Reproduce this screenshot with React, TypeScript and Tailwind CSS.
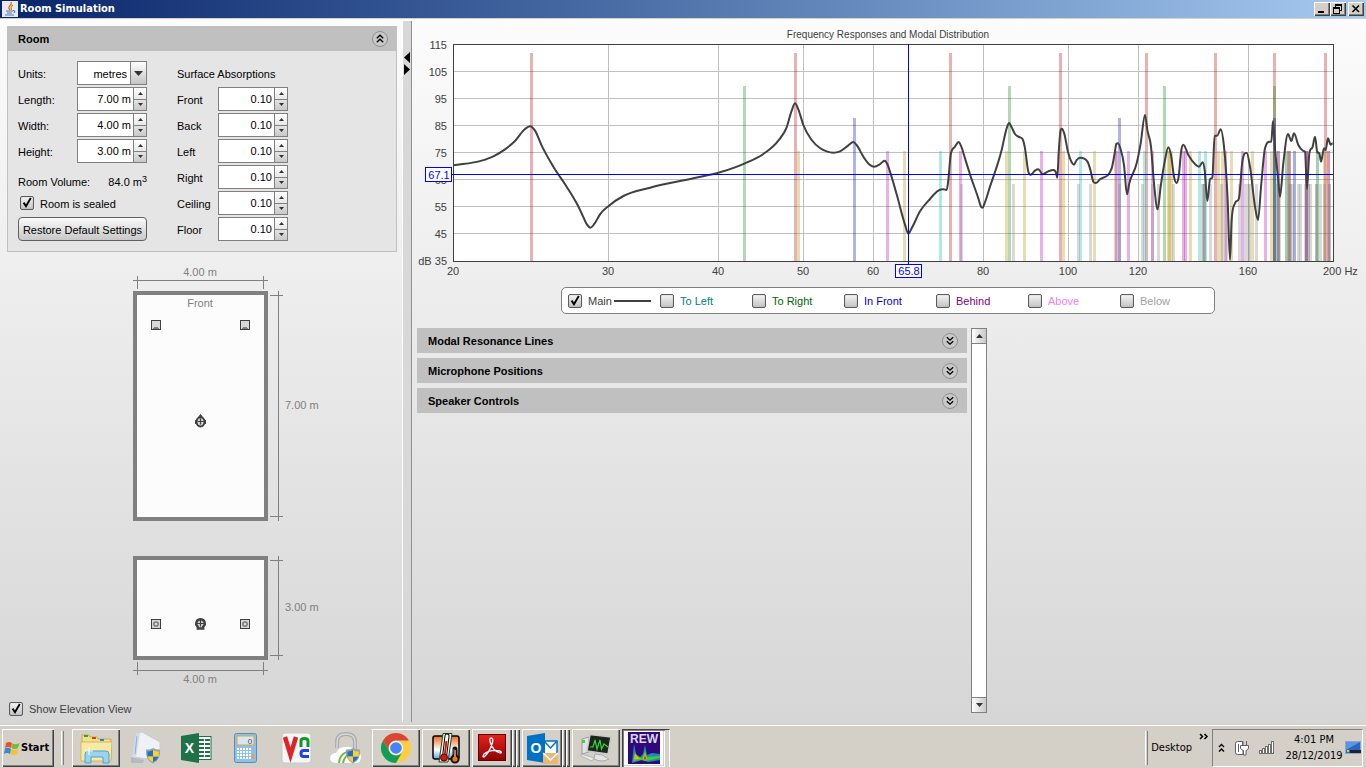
import { useState } from "react";
import type { ReactNode } from "react";

// ---- chart scale ----

const PLOT = { left: 41, top: 25, right: 921, bottom: 242 };
const levels = [115, 105, 95, 85, 75, 65, 55, 45];
const freqs = [20, 30, 40, 50, 60, 80, 100, 120, 160];

function freqToX(f: number) {
  return PLOT.left + 880 * Math.log10(f / 20);
}

function levelToY(db: number) {
  return PLOT.top + (115 - db) * 2.7;
}

// ---- room modes ----

type Mode = { x: number; kind: string };

// drawn in this order, so later kinds lie on top
const modeStyles: Record<string, { top: number; color: string }> = {
  L: { top: 34, color: "#b20000" },
  W: { top: 67, color: "#008000" },
  H: { top: 99, color: "#0000b2" },
  LW: { top: 132, color: "#b29000" },
  LH: { top: 132, color: "#b200b2" },
  WH: { top: 132, color: "#00b2b2" },
  LWH: { top: 165, color: "#808080" },
};

function roomModes(length: number, width: number, height: number) {
  const modes: Mode[] = [];
  for (let i = 0; i <= 9; i++) {
    for (let j = 0; j <= 6; j++) {
      for (let k = 0; k <= 4; k++) {
        const f = 171.5 * Math.hypot(i / length, j / width, k / height);
        if (f < 20 || f > 199) continue;
        const kind = (i ? "L" : "") + (j ? "W" : "") + (k ? "H" : "");
        modes.push({ x: Math.round(freqToX(f)) - 1, kind });
      }
    }
  }
  const order = Object.keys(modeStyles);
  return modes.sort((a, b) => order.indexOf(a.kind) - order.indexOf(b.kind));
}

const modes = roomModes(7, 4, 3);

// main response, three units to a pixel
const response: number[][] = [
  [130, 436], [215, 422], [250, 409], [285, 388], [315, 363], [345, 327],
  [360, 319], [375, 332], [395, 377], [430, 440], [470, 500], [500, 550],
  [515, 580], [530, 612], [541, 623], [553, 612], [570, 583], [597, 557],
  [640, 528], [720, 503], [850, 475], [930, 457], [1003, 431], [1060, 402],
  [1105, 362], [1130, 322], [1145, 272], [1155, 250], [1165, 268],
  [1180, 315], [1205, 360], [1230, 384], [1250, 394], [1270, 398],
  [1290, 394], [1315, 376], [1330, 366], [1340, 375], [1360, 410],
  [1380, 435], [1393, 440], [1408, 434], [1424, 422], [1432, 432],
  [1440, 455], [1460, 523], [1485, 614], [1495, 641], [1505, 625],
  [1530, 574], [1560, 537], [1585, 512], [1600, 508], [1610, 510],
  [1615, 480], [1622, 405], [1635, 380], [1646, 366], [1654, 380],
  [1665, 415], [1680, 463], [1705, 535], [1713, 560], [1718, 563],
  [1723, 552], [1740, 500], [1775, 390], [1790, 325], [1797, 309],
  [1805, 322], [1815, 342], [1825, 350], [1838, 358], [1845, 385],
  [1855, 455], [1862, 464], [1875, 452], [1885, 448], [1898, 462],
  [1915, 454], [1930, 450], [1938, 458], [1942, 473], [1946, 400],
  [1952, 330], [1956, 326], [1962, 338], [1975, 400], [1985, 427],
  [1992, 434], [2000, 420], [2010, 413], [2032, 424], [2040, 445],
  [2050, 485], [2057, 489], [2070, 478], [2105, 445], [2114, 400],
  [2119, 372], [2124, 370], [2132, 388], [2142, 435], [2151, 523],
  [2158, 490], [2180, 430], [2192, 370], [2205, 285], [2212, 330],
  [2223, 380], [2232, 490], [2243, 568], [2252, 500], [2265, 420],
  [2275, 382], [2283, 405], [2293, 475], [2300, 489], [2306, 470],
  [2314, 390], [2320, 374], [2335, 405], [2355, 432], [2367, 440],
  [2378, 427], [2384, 450], [2392, 543], [2400, 478], [2407, 473],
  [2414, 348], [2422, 347], [2432, 328], [2442, 380], [2448, 450],
  [2453, 540], [2460, 720], [2465, 600], [2475, 550], [2487, 535],
  [2497, 425], [2510, 398], [2520, 440], [2535, 560], [2544, 600],
  [2554, 490], [2565, 385], [2580, 365], [2584, 365], [2589, 303],
  [2596, 400], [2603, 460], [2610, 530], [2620, 430], [2634, 342],
  [2644, 363], [2652, 340], [2665, 375], [2680, 393], [2685, 395],
  [2691, 507], [2698, 400], [2708, 380], [2715, 350], [2722, 397],
  [2728, 400], [2733, 425], [2742, 385], [2747, 390], [2754, 355],
  [2762, 374], [2768, 370],
];

// smooth curve through the points, flat at every peak and dip
function smoothPath(pts: number[][]) {
  const slopes = pts.map((p, i) => {
    const a = pts[i - 1];
    const b = pts[i + 1];
    if (!a) return (b[1] - p[1]) / (b[0] - p[0]);
    if (!b) return 0;
    const h0 = p[0] - a[0];
    const h1 = b[0] - p[0];
    const s0 = (p[1] - a[1]) / h0;
    const s1 = (b[1] - p[1]) / h1;
    if (s0 * s1 <= 0) return 0;
    const mid = (s0 * h1 + s1 * h0) / (h0 + h1);
    const limit = 3 * Math.min(Math.abs(s0), Math.abs(s1));
    return Math.sign(mid) * Math.min(Math.abs(mid), limit);
  });
  let d = `M${pts[0][0]} ${pts[0][1]}`;
  for (let i = 1; i < pts.length; i++) {
    const [x0, y0] = pts[i - 1];
    const [x1, y1] = pts[i];
    const h = (x1 - x0) / 3;
    d += `C${x0 + h} ${y0 + h * slopes[i - 1]} ${x1 - h} ${y1 - h * slopes[i]} ${x1} ${y1}`;
  }
  return d;
}

function ResponseChart() {
  return (
    <svg
      viewBox="0 0 954 262"
      className="block w-full text-[11px]"
      fill="#404040"
      role="img"
      aria-label="Frequency Responses and Modal Distribution"
    >
      <text x="476" y="19" textAnchor="middle" className="text-[10px]">
        Frequency Responses and Modal Distribution
      </text>
      <rect x="41" y="25" width="881" height="218" fill="#fff" />
      <g stroke="#c0c0c0" shapeRendering="crispEdges">
        {levels.slice(1).map((db) => (
          <line
            key={db}
            x1={PLOT.left}
            x2={PLOT.right}
            y1={Math.floor(levelToY(db)) + 0.5}
            y2={Math.floor(levelToY(db)) + 0.5}
          />
        ))}
        {freqs.slice(1).map((f) => (
          <line
            key={f}
            y1={PLOT.top}
            y2={PLOT.bottom}
            x1={Math.round(freqToX(f)) + 0.5}
            x2={Math.round(freqToX(f)) + 0.5}
          />
        ))}
      </g>
      <g shapeRendering="crispEdges" fillOpacity="0.3">
        {modes.map((m, i) => (
          <rect
            key={i}
            x={m.x}
            y={modeStyles[m.kind].top}
            width="3"
            height={PLOT.bottom - modeStyles[m.kind].top}
            fill={modeStyles[m.kind].color}
          />
        ))}
      </g>
      <path
        d={smoothPath(response)}
        transform="translate(-2 1) scale(0.33333)"
        fill="none"
        stroke="#404040"
        strokeWidth="6"
        strokeLinejoin="round"
      />
      <rect
        x="41.5"
        y="25.5"
        width="880"
        height="217"
        fill="none"
        stroke="#404040"
        shapeRendering="crispEdges"
      />
      {levels.map((db) => (
        <text key={db} x="35" y={Math.floor(levelToY(db)) + 5} textAnchor="end">
          {db}
        </text>
      ))}
      <text x="35" y="246" textAnchor="end">
        dB 35
      </text>
      {freqs.map((f) => (
        <text key={f} x={Math.round(freqToX(f))} y="256" textAnchor="middle">
          {f}
        </text>
      ))}
      <text x="911" y="256">
        200 Hz
      </text>
      {/* cursor */}
      <g stroke="#0000ff" shapeRendering="crispEdges">
        <line x1="496.5" x2="496.5" y1="25" y2="245" />
        <line x1="40" x2="921" y1="155.5" y2="155.5" />
        <rect x="13.5" y="148.5" width="26" height="14" fill="#fff" />
        <rect x="483.5" y="245.5" width="26" height="13" fill="#fff" />
      </g>
      <g fill="#0000ff" textAnchor="middle">
        <text x="27" y="160">
          67.1
        </text>
        <text x="497" y="256">
          65.8
        </text>
      </g>
    </svg>
  );
}

// ---- small controls ----

function Tick({
  label,
  className = "",
  checked = false,
}: {
  label: ReactNode;
  className?: string;
  checked?: boolean;
}) {
  return (
    <label className={`flex items-center gap-1.5 ${className}`}>
      <span className="relative block size-3.5">
        <input
          type="checkbox"
          defaultChecked={checked}
          className="peer block size-3.5 appearance-none rounded-xs border border-[#5a5a60] bg-linear-to-b from-[#f4f4f4] to-[#c4c4c4] shadow-[inset_0_0_1px_#888]"
        />
        <svg
          viewBox="0 0 14 14"
          className="pointer-events-none absolute inset-0 hidden size-3.5 peer-checked:block"
          fill="none"
          stroke="#000"
        >
          <path d="M3.6 6.6 L6 10.2 L10.8 2" strokeWidth="1.9" />
        </svg>
      </span>
      {label}
    </label>
  );
}

function Spinner({ id, value }: { id: string; value: string }) {
  const [text, setText] = useState(value);

  function step(by: number) {
    const unit = text.endsWith("m") ? " m" : "";
    setText((parseFloat(text) + by).toFixed(2) + unit);
  }

  return (
    <div className="flex h-6 w-[70px] border border-[#808080] bg-white">
      <input
        id={id}
        value={text}
        onChange={(e) => setText(e.target.value)}
        className="min-w-0 flex-1 pr-0.5 text-right outline-none"
      />
      <div className="box-content flex w-3 flex-col border-l border-[#808080]">
        <button
          type="button"
          aria-label="Increase"
          onClick={() => step(0.01)}
          className="flex flex-1 items-center justify-center border-b border-[#808080] bg-linear-to-b from-white to-[#e8e8e8]"
        >
          <svg width="5" height="3" fill="#333">
            <path d="M0 3 L2.5 0 L5 3z" />
          </svg>
        </button>
        <button
          type="button"
          aria-label="Decrease"
          onClick={() => step(-0.01)}
          className="flex flex-1 items-center justify-center bg-linear-to-b from-[#e4e4e4] to-[#c8c8c8]"
        >
          <svg width="5" height="3" fill="#333">
            <path d="M0 0 L2.5 3 L5 0z" />
          </svg>
        </button>
      </div>
    </div>
  );
}

function FoldIcon({ up = false }: { up?: boolean }) {
  return (
    <svg width="16" height="16" viewBox="0 0 16 16" fill="none">
      <circle cx="8" cy="8" r="7.5" fill="#c8c8c8" stroke="#909090" />
      <g stroke="#000" strokeWidth="1.3">
        {up ? (
          <path d="M4.8 7.2 L8 4.2 L11.2 7.2 M4.8 11.2 L8 8.2 L11.2 11.2" />
        ) : (
          <path d="M4.8 4.2 L8 7.2 L11.2 4.2 M4.8 8.2 L8 11.2 L11.2 8.2" />
        )}
      </g>
    </svg>
  );
}

// ---- left side ----

const sizes = [
  { id: "length", label: "Length:", value: "7.00 m" },
  { id: "width", label: "Width:", value: "4.00 m" },
  { id: "height", label: "Height:", value: "3.00 m" },
];

const surfaces = ["Front", "Back", "Left", "Right", "Ceiling", "Floor"];

function RoomPanel() {
  return (
    <section className="mr-[5px] ml-[7px] border border-[#c0c0c0] bg-[#e5e5e5]">
      <button
        type="button"
        className="flex h-6 w-full items-center justify-between bg-[#c0c0c0] pr-2 pl-[10px] font-bold"
      >
        Room
        <FoldIcon up />
      </button>
      <div className="flex gap-[30px] py-[10px] pl-[10px]">
        <div className="flex w-[129px] flex-col gap-[2px]">
          <div className="flex h-6 items-center justify-between">
            <label htmlFor="units" className="pt-0.5">
              Units:
            </label>
            <div className="flex h-6 w-[70px] border border-[#808080] bg-white">
              <select
                id="units"
                className="min-w-0 flex-1 appearance-none pt-px pr-[3px] outline-none [text-align-last:right]"
              >
                <option>metres</option>
                <option>feet</option>
              </select>
              <span className="flex w-4 items-center justify-center border-l border-[#808080] bg-linear-to-b from-white to-[#c4c4c4]">
                <svg width="9" height="5" fill="#333">
                  <path d="M0 0 H9 L4.5 5z" />
                </svg>
              </span>
            </div>
          </div>
          {sizes.map((s) => (
            <div key={s.id} className="flex h-6 items-center justify-between">
              <label htmlFor={s.id} className="pt-0.5">
                {s.label}
              </label>
              <Spinner id={s.id} value={s.value} />
            </div>
          ))}
          <div className="flex h-6 items-end justify-between">
            <span>Room Volume:</span>
            <span>
              84.0 m<sup className="text-[9px]">3</sup>
            </span>
          </div>
          <Tick
            label={<span className="pt-0.5">Room is sealed</span>}
            checked
            className="h-6 pl-0.5"
          />
          <button
            type="button"
            className="h-6 rounded-[4px] border border-[#606060] bg-linear-to-b from-[#fafafa] to-[#c8c8c8] pt-px whitespace-nowrap"
          >
            Restore Default Settings
          </button>
        </div>
        <div className="flex w-[111px] flex-col gap-[2px]">
          <p className="flex h-6 items-center pt-0.5">Surface Absorptions</p>
          {surfaces.map((s) => (
            <div key={s} className="flex h-6 items-center justify-between">
              <label htmlFor={s} className="pt-0.5">
                {s}
              </label>
              <Spinner id={s} value="0.10" />
            </div>
          ))}
        </div>
      </div>
    </section>
  );
}

function PlanView() {
  return (
    <svg width="200" height="262" fill="#808080" className="text-[11px]">
      <g stroke="#808080" shapeRendering="crispEdges">
        <path d="M3 18.5 H138 M7.5 14 V27 M133.5 14 V27" />
        <path d="M148.5 29 V259 M140 33.5 H153 M140 254.5 H153" />
        <rect x="5" y="31" width="131" height="226" fill="#fcfcfc" strokeWidth="4" />
      </g>
      <text x="70" y="14" textAnchor="middle">
        4.00 m
      </text>
      <text x="70" y="45" textAnchor="middle">
        Front
      </text>
      <text x="155" y="147">
        7.00 m
      </text>
      {[21, 110].map((x) => (
        <g key={x} shapeRendering="crispEdges">
          <rect x={x + 0.5} y="58.5" width="9" height="9" fill="#d8d8d8" stroke="#404040" />
          <path d={`M${x + 2} 67 V66 H${x + 3} V65 H${x + 7} V66 H${x + 8} V67z`} fill="#808080" />
        </g>
      ))}
      <g stroke="#404040">
        <path d="M70.5 152.5 L68 156 H73z" fill="#404040" />
        <ellipse cx="70.5" cy="159.8" rx="4" ry="4.6" fill="#d8d8d8" strokeWidth="2" />
        <path d="M70.5 156.5 V162.5 M67.5 159.5 H73.5" strokeWidth="1.2" />
        <path d="M65.5 158 V162 M75.5 158 V162" />
      </g>
    </svg>
  );
}

function ElevationView() {
  return (
    <svg width="200" height="134" fill="#808080" className="text-[11px]">
      <g stroke="#808080" shapeRendering="crispEdges">
        <rect x="5" y="4" width="131" height="100" fill="#fcfcfc" strokeWidth="4" />
        <path d="M148.5 2 V106 M140 6.5 H153 M140 101.5 H153" />
        <path d="M3 116.5 H138 M7.5 108 V121 M133.5 108 V121" />
      </g>
      <text x="155" y="57">
        3.00 m
      </text>
      <text x="70" y="129" textAnchor="middle">
        4.00 m
      </text>
      {[21, 110].map((x) => (
        <g key={x}>
          <rect x={x + 0.5} y="65.5" width="9" height="9" fill="#d8d8d8" stroke="#404040" />
          <circle cx={x + 5} cy="70" r="2.2" fill="none" stroke="#707070" strokeWidth="1.3" />
        </g>
      ))}
      <g stroke="#404040">
        <path d="M67.8 74.5 V72.8 L66.2 70.5 Q66 65.5 70.5 65.2 Q75 65.5 74.8 70.5 L73.2 72.8 V74.5z" fill="#d8d8d8" strokeWidth="2.4" />
        <path d="M70.5 66 V72.5 M67 69.5 H74" strokeWidth="1.2" />
      </g>
    </svg>
  );
}

function Divider() {
  return (
    <div className="my-0.5 flex w-[10px] flex-col items-center border-r border-l border-r-[#909090] border-l-white bg-[#d8d8d8] pt-[31px]">
      <svg width="6" height="24" fill="#000">
        <path d="M6 0 V11 L0 5.5z M0 12 V23 L6 17.5z" />
      </svg>
    </div>
  );
}

// ---- right side ----

const positions = [
  { label: "To Left", color: "text-[#008080]" },
  { label: "To Right", color: "text-[#006400]" },
  { label: "In Front", color: "text-[#0000cd]" },
  { label: "Behind", color: "text-[#800080]" },
  { label: "Above", color: "text-[#ee82ee]" },
  { label: "Below", color: "text-[#a0a0a0]" },
];

const folded = ["Modal Resonance Lines", "Microphone Positions", "Speaker Controls"];

function Legend() {
  return (
    <div className="flex justify-center pt-[6px] pr-0.5">
      <div className="flex h-[27px] w-[654px] items-center rounded-[5px] border border-[#808080] bg-white pl-[6px]">
        <Tick
          checked
          className="w-[92px] text-[#404040]"
          label={
            <span className="flex items-center gap-0.5">
              Main <i className="block h-0.5 w-[37px] bg-[#404040]" />
            </span>
          }
        />
        {positions.map((p) => (
          <Tick key={p.label} label={p.label} className={`w-[92px] ${p.color}`} />
        ))}
      </div>
    </div>
  );
}

function ScrollBar() {
  return (
    <div className="flex w-4 flex-col justify-between border border-[#808080] bg-white">
      <button
        type="button"
        aria-label="Scroll up"
        className="flex h-[15px] items-center justify-center border-b border-[#808080] bg-linear-to-r from-white to-[#c8c8c8]"
      >
        <svg width="7" height="4" fill="#333">
          <path d="M0 4 L3.5 0 L7 4z" />
        </svg>
      </button>
      <button
        type="button"
        aria-label="Scroll down"
        className="flex h-[15px] items-center justify-center border-t border-[#808080] bg-linear-to-r from-white to-[#c8c8c8]"
      >
        <svg width="7" height="4" fill="#333">
          <path d="M0 0 L3.5 4 L7 0z" />
        </svg>
      </button>
    </div>
  );
}

// ---- title bar ----

function TitleBar() {
  const frame =
    "flex h-3.5 w-4 items-center justify-center bg-[#d4d0c8] shadow-[inset_1px_1px_#fff,inset_-1px_-1px_#404040,inset_-2px_-2px_#808080]";
  return (
    <header className="flex h-[19px] items-center border-b border-[#d4d0c8] bg-linear-to-r from-[#0a246a] to-[#a6caf0] px-0.5">
      <svg width="16" height="16" viewBox="0 0 16 16" fill="none">
        <rect width="16" height="16" fill="#e6ebf2" />
        <path d="M9 1 Q10 3 7.5 5 Q6 7 8 9 M11 4 Q8.5 5.5 9 7 Q10 8 9 9" stroke="#e76f00" strokeWidth="1.2" />
        <path d="M4 10 H11 M5 12 H10 M3 14 H12 M11 9.5 Q14 9.5 12 12" stroke="#4a78a8" strokeWidth="1.1" />
      </svg>
      <h1 className="ml-0.5 flex-1 font-['DejaVu_Sans_Condensed','DejaVu_Sans',sans-serif] text-[11px] font-bold text-white">
        Room Simulation
      </h1>
      <button type="button" aria-label="Minimize" className={frame}>
        <svg width="16" height="14" shapeRendering="crispEdges">
          <path d="M4 9 H10 V11 H4z" />
        </svg>
      </button>
      <button type="button" aria-label="Restore" className={frame}>
        <svg width="16" height="14" fill="none" stroke="#000" shapeRendering="crispEdges">
          <path d="M5.5 5 V2.5 H11.5 V8.5 H9 M5 3.5 H12" />
          <path d="M3.5 5.5 H9.5 V11.5 H3.5z M3 6.5 H10" fill="#d4d0c8" />
        </svg>
      </button>
      <button type="button" aria-label="Close" className={`ml-0.5 ${frame}`}>
        <svg width="16" height="14" stroke="#000" strokeWidth="1.6">
          <path d="M4.5 3.5 L11 10 M11 3.5 L4.5 10" />
        </svg>
      </button>
    </header>
  );
}

// ---- task bar ----

function Shield() {
  return (
    <g>
      <path d="M23 16 Q27 18 30 17.5 Q31 28 23 31.5 Q15 28 16 17.5 Q20 18 23 16z" fill="#98a2ac" />
      <path d="M23 18 Q20 19.5 17.5 19.5 V24.5 H23z M23 24.5 H28.5 Q27 28.5 23 30z" fill="#1e6fd0" />
      <path d="M23 18 Q26 19.5 28.7 19.5 V24.5 H23z M23 24.5 H17.7 Q19 28.5 23 30z" fill="#ffd21f" />
    </g>
  );
}

function FolderIcon() {
  return (
    <svg width="32" height="32">
      <path d="M2 3 H9 L10 5 H17 L18 7 H31 V28 H2z" fill="#f3e08a" stroke="#cba950" />
      <path d="M4 3 h4 v2 h-4z" fill="#1fae2b" />
      <path d="M12 5 h4 v2 h-4z" fill="#d84315" />
      <path d="M20 7 h4 v2 h-4z" fill="#1e88e5" />
      <path d="M1 10 H32 L31 29 H1z" fill="#f8e9a4" stroke="#d5b55c" />
      <path d="M5 31 V22 Q5 19 8 19 H26 Q29 19 29 22 V31 H23 V25 H11 V31z" fill="#9bd3ee" stroke="#4da3cf" />
      <path d="M9 15 V23 M5 19 H13" stroke="#fff" />
    </svg>
  );
}

function ServerIcon() {
  return (
    <svg width="32" height="32">
      <path d="M6 1 L12 0 L30 10 V20 L24 28 L4 25z" fill="#eef1f5" stroke="#c7ccd4" />
      <path d="M6 1 L2 25 L6 26 L10 1z" fill="#d3dbe4" />
      <path d="M7 4 L5 22" stroke="#7fb6e6" />
      <path d="M1 25 L14 28 L13 31 H1z" fill="#b4bac2" />
      <Shield />
    </svg>
  );
}

function ExcelIcon() {
  return (
    <svg width="32" height="32">
      <rect x="17" y="4.5" width="14" height="23" fill="#fff" stroke="#1f7246" />
      <path
        d="M19 7h5v2h-5z M25 7h5v2h-5z M19 11h5v2h-5z M25 11h5v2h-5z M19 15h5v2h-5z M25 15h5v2h-5z M19 19h5v2h-5z M25 19h5v2h-5z M19 23h5v2h-5z M25 23h5v2h-5z"
        fill="#1f7246"
      />
      <path d="M1 4 L19 1 V31 L1 28z" fill="#1f7246" />
      <text x="9.5" y="21" textAnchor="middle" fontSize="14" fontWeight="bold" fill="#fff">
        X
      </text>
    </svg>
  );
}

function CalculatorIcon() {
  return (
    <svg width="32" height="32">
      <rect x="4.5" y="1.5" width="22" height="29" rx="2" fill="#8fc1e8" stroke="#4f8fc4" />
      <rect x="7" y="4" width="17" height="9" fill="#d6e7f2" stroke="#e8a13a" />
      <text x="20" y="12" textAnchor="middle" fontSize="8" fill="#33556f">
        0
      </text>
      <g fill="#fff">
        {[16, 19, 22, 25].map((y) =>
          [7, 10, 13, 16, 19].map((x) => (
            <rect key={`${x}-${y}`} x={x} y={y} width="2" height="2" />
          ))
        )}
      </g>
      <rect x="22" y="22" width="2" height="5" fill="#f59a23" />
    </svg>
  );
}

function VncIcon() {
  return (
    <svg width="32" height="32" fill="none">
      <rect x="2" y="1" width="29" height="30" rx="3" fill="#f6f6f6" stroke="#c8c8c8" />
      <path d="M5 5 L10.5 23 L16 5" stroke="#e0222a" strokeWidth="4.5" />
      <path d="M21 15 V9 Q21 6.5 24.5 6.5 Q28 6.5 28 9 V15" stroke="#0b9a26" strokeWidth="3" />
      <path d="M29 18.5 H23.5 Q21 18.5 21 21.5 Q21 24.5 23.5 24.5 H29" stroke="#1a45e0" strokeWidth="3" />
    </svg>
  );
}

function PadlockIcon() {
  return (
    <svg width="32" height="32" fill="none">
      <path d="M7 16 V10 Q7 2 16 2 Q25 2 25 10 V18" stroke="#a9adb0" strokeWidth="4" />
      <path d="M7 16 V10 Q7 2 16 2 Q25 2 25 10 V18" stroke="#d5d8da" strokeWidth="1.5" />
      <path d="M5 31 Q0 30 0 26 Q1 21 6 21 Q9 14 16 15 Q22 14 25 19 Q31 20 31 25 Q31 30 27 31z" fill="#fff" />
      <path d="M9 31 Q9 23 18 19 M13 31 Q14 25 20 21" stroke="#6cb33f" strokeWidth="1.8" />
      <Shield />
    </svg>
  );
}

function ChromeIcon() {
  return (
    <svg width="32" height="32" viewBox="0 0 32 32">
      <circle cx="16" cy="16" r="15" fill="#ffcd40" />
      <path d="M3 8.5 A15 15 0 0 1 29 8.5 H16 A7.5 7.5 0 0 0 9.5 19.7z" fill="#db4437" />
      <path d="M3 8.5 A15 15 0 0 0 16 31 L22.5 19.7 A7.5 7.5 0 0 1 9.5 19.7z" fill="#0f9d58" />
      <circle cx="16" cy="16" r="7.2" fill="#f1f1f1" />
      <circle cx="16" cy="16" r="5.8" fill="#4285f4" />
    </svg>
  );
}

function ThermometerIcon() {
  return (
    <svg width="32" height="32">
      <defs>
        <linearGradient id="heat" x1="0" y1="0" x2="0" y2="1">
          <stop offset="0" stopColor="#f26a1b" />
          <stop offset="0.6" stopColor="#fff" />
          <stop offset="1" stopColor="#5aa4e8" />
        </linearGradient>
      </defs>
      <rect x="3" y="4" width="26" height="23" rx="2" fill="url(#heat)" stroke="#000" strokeWidth="1.5" />
      <path d="M13 1.5 H22 L18 30 H9z" fill="#e6f4e6" stroke="#1c4a1c" />
      <path d="M17 4 L14.5 25" stroke="#000" strokeWidth="5" strokeLinecap="round" />
      <path d="M17 4 L14.5 25" stroke="#fff" strokeWidth="3" strokeLinecap="round" />
      <path d="M16.4 9 L14.5 25" stroke="#e01010" strokeWidth="2" />
      <circle cx="14" cy="25.5" r="3.5" fill="#e01010" stroke="#400" />
      <path d="M25 17 V27" stroke="#111" strokeWidth="5" strokeLinecap="round" />
      <circle cx="25" cy="27" r="3.6" fill="#f07818" stroke="#111" strokeWidth="2" />
      <path d="M25 18 V26" stroke="#f07818" strokeWidth="2" />
      <path d="M24 17 V22" stroke="#4078e0" />
    </svg>
  );
}

function AcrobatIcon() {
  return (
    <svg width="30" height="30">
      <defs>
        <linearGradient id="acro" x1="0" y1="0" x2="0" y2="1">
          <stop offset="0" stopColor="#e8201c" />
          <stop offset="1" stopColor="#8c0404" />
        </linearGradient>
      </defs>
      <rect x="1.5" y="1.5" width="27" height="26" fill="url(#acro)" stroke="#600" />
      <path
        d="M14 5 Q17 5 15 11 Q12 20 7 24 Q5 24 7 21 Q14 16 23 18 Q26 20 23 20 Q16 18 13.5 10 Q12 5 14 5z"
        fill="none"
        stroke="#fff"
        strokeWidth="1.3"
      />
    </svg>
  );
}

function OutlookIcon() {
  return (
    <svg width="32" height="32">
      <path d="M18 9 H31 V22 H18z" fill="#fff" stroke="#0072c6" strokeWidth="1.5" />
      <path d="M18 9 L24.5 16 L31 9" fill="none" stroke="#0072c6" strokeWidth="1.5" />
      <path d="M1 4 L19 1 V31 L1 28z" fill="#0072c6" />
      <text x="10" y="21" textAnchor="middle" fontSize="14" fontWeight="bold" fill="#fff">
        O
      </text>
      <path d="M17 21 H32 V32 H17z" fill="#eab676" />
      <path d="M17 21 L24.5 28 L32 21" fill="none" stroke="#fff" strokeWidth="1.5" />
    </svg>
  );
}

function MonitorIcon() {
  return (
    <svg width="32" height="32">
      <path d="M2 7 L9 5 V20 L2 22z" fill="#e0e2e4" stroke="#9a9da0" />
      <rect x="2" y="8" width="3" height="3" fill="#3fd23f" />
      <path d="M10 2.5 L31 5 L28 22 L7 19z" fill="#1d261d" stroke="#c8cacc" strokeWidth="1.5" />
      <path d="M10 15 L13 15 L15 8 L17 17 L20 8 L21.5 17 L24 12 L28 15" fill="none" stroke="#35d435" strokeWidth="1.2" />
      <path d="M15 22 L22 23 L29 27 Q22 31 14 27z" fill="#e2e4e6" stroke="#a8aaac" />
      <path d="M1 22 L14 26 L12 29 L1 24z" fill="#eceeef" stroke="#b0b2b4" />
    </svg>
  );
}

function RewIcon() {
  return (
    <svg width="32" height="32">
      <rect width="32" height="32" fill="#30087c" />
      <path d="M4 31 L6 12 L8 22 L12 25 L15 22 L17 13 L19 23 L24 21 L32 22 V28 L20 30 L14 28z" fill="#168fb8" />
      <path d="M5 29 L7 20 L9 24 L14 26 L17 19 L19 25 L32 24 V26 L18 29 L13 28z" fill="#46c832" />
      <path d="M6 27 L7 22 L12 27z M15 27 L17 21 L19 27z" fill="#f0b018" />
      <path d="M16 27 L17 23 L18 27z" fill="#e01818" />
      <text x="16" y="11" textAnchor="middle" fontSize="12" fontWeight="bold" fill="#dcd8ec">
        REW
      </text>
    </svg>
  );
}

const tasks = [
  { name: "Explorer", icon: <FolderIcon />, open: true },
  { name: "Server Manager", icon: <ServerIcon /> },
  { name: "Excel", icon: <ExcelIcon /> },
  { name: "Calculator", icon: <CalculatorIcon /> },
  { name: "VNC", icon: <VncIcon /> },
  { name: "VPN", icon: <PadlockIcon /> },
  { name: "Chrome", icon: <ChromeIcon />, open: true },
  { name: "Thermometer", icon: <ThermometerIcon />, open: true },
  { name: "Acrobat", icon: <AcrobatIcon />, stack: true },
  { name: "Outlook", icon: <OutlookIcon />, stack: true },
  { name: "Monitor", icon: <MonitorIcon />, open: true },
  { name: "REW", icon: <RewIcon />, active: true },
];

function TaskButton({ task }: { task: (typeof tasks)[number] }) {
  const base = "flex h-[38px] items-center justify-center";
  const raised =
    "shadow-[inset_1px_1px_#fff,inset_-1px_-1px_#404040,inset_-2px_-2px_#808080]";

  if (task.stack) {
    return (
      <button type="button" aria-label={task.name} className="flex w-12">
        <span className={`${base} w-10 ${raised}`}>{task.icon}</span>
        <span className={`h-[38px] w-1 ${raised}`} />
        <span className={`h-[38px] w-1 ${raised}`} />
      </button>
    );
  }
  if (task.active) {
    return (
      <button type="button" aria-label={task.name} className="flex w-12">
        <span
          className={`${base} w-[43px] bg-white shadow-[inset_1px_1px_#404040,inset_2px_2px_#808080,inset_-1px_-1px_#fff,inset_-2px_-2px_#d4d0c8]`}
        >
          {task.icon}
        </span>
        <span className="h-[38px] w-[5px] border-t border-r border-t-[#404040] border-r-white" />
      </button>
    );
  }
  return (
    <button
      type="button"
      aria-label={task.name}
      className={`${base} w-12 ${task.open ? raised : ""}`}
    >
      {task.icon}
    </button>
  );
}

function TaskBar() {
  return (
    <footer className="flex h-11 items-center border-t border-[#d4d0c8] bg-[#d4d0c8] pt-0.5 pr-[3px] pl-0.5 font-['DejaVu_Sans_Condensed','DejaVu_Sans',sans-serif] text-[11px] shadow-[inset_0_1px_#fff]">
      <button
        type="button"
        className="flex h-[38px] w-[52px] items-center gap-px pl-0.5 font-bold shadow-[inset_1px_1px_#fff,inset_-1px_-1px_#404040,inset_-2px_-2px_#808080]"
      >
        <svg width="16" height="16" viewBox="0 0 16 16">
          <path d="M2 3 Q5 1 8 3 L7 8 Q4 6 1 8z" fill="#e8542a" />
          <path d="M8.5 3.5 Q12 5 15.5 3 L14 8 Q11 10 7.5 8z" fill="#7cb83a" />
          <path d="M1 8.5 Q4 7 7 9 L6 14 Q3 12 0 14z" fill="#3a86d8" />
          <path d="M7.5 9 Q11 11 14 9 L13 14 Q10 16 6.5 14z" fill="#f5c22a" />
        </svg>
        Start
      </button>
      <span className="mr-2 ml-[7px] h-[34px] w-[3px] border-r border-l border-r-[#808080] border-l-white" />
      <nav className="flex flex-1 gap-0.5 font-['Liberation_Sans',Arial,sans-serif]">
        {tasks.map((t) => (
          <TaskButton key={t.name} task={t} />
        ))}
      </nav>
      <span className="mr-[3px] h-[34px] w-[3px] border-r border-l border-r-[#808080] border-l-white" />
      <span>Desktop</span>
      <svg width="10" height="7" className="mr-[3px] mb-[22px] ml-[7px]" fill="none" stroke="#000" strokeWidth="1.5">
        <path d="M1 1 L3.5 3.5 L1 6 M5.5 1 L8 3.5 L5.5 6" />
      </svg>
      <div className="flex h-[38px] w-[151px] items-center border border-t-[#808080] border-r-white border-b-white border-l-[#808080] pl-[5px]">
        <svg width="7" height="10" fill="none" stroke="#000" strokeWidth="1.4">
          <path d="M1 4 L3.5 1.5 L6 4 M1 8.5 L3.5 6 L6 8.5" />
        </svg>
        <svg width="16" height="18" className="ml-[9px]" fill="#fff" stroke="#606060">
          <path d="M9 2.5 H3.5 Q1.5 2.5 1.5 4.5 V13.5 Q1.5 15.5 3.5 15.5 H9z" />
          <path d="M4.5 5 V13" />
          <path d="M8.5 2 V6 M12.5 2 V6 M6.500 6.500 H14.500 V9 Q14 11 12 11.5 V16 H9.5 V11.5 Q7 11 6.5 9z" />
        </svg>
        <svg width="16" height="13" className="ml-[9px]" fill="#fff" stroke="#707070" shapeRendering="crispEdges">
          <path d="M0.5 9.5h2v3h-2z M3.5 7.5h2v5h-2z M6.5 5.5h2v7h-2z M9.5 3.5h2v9h-2z M12.5 0.5h2v12h-2z" />
        </svg>
        <div className="flex-1 pl-2 text-center leading-4">
          <div>4:01 PM</div>
          <div>28/12/2019</div>
        </div>
        <svg width="16" height="14" className="mr-px">
          <rect x="0.5" y="0.5" width="15" height="12" fill="#2a66c8" stroke="#8aa8cc" />
          <path d="M1 1 H15 L1 9z" fill="#5c94e4" />
          <rect x="5" y="9" width="11" height="3" fill="#222" />
          <path d="M2 9 h2 v2 h-2z" fill="#f5c22a" />
        </svg>
      </div>
    </footer>
  );
}

export default function App() {
  return (
    <div className="flex h-screen flex-col overflow-hidden font-['Liberation_Sans',Arial,sans-serif] text-[11px] leading-[14px] text-black">
      <TitleBar />
      <main className="flex min-h-0 flex-1 bg-linear-to-b from-[#fcfcfc] to-[#d6d6d6]">
        <div className="flex w-[402px] flex-col pt-[7px]">
          <RoomPanel />
          <div className="mt-[10px] ml-[130px] flex flex-1 flex-col gap-[30px]">
            <PlanView />
            <ElevationView />
          </div>
          <Tick
            label="Show Elevation View"
            checked
            className="mb-2 ml-[9px] text-[#404040]"
          />
        </div>
        <Divider />
        <div className="flex min-w-0 flex-1 flex-col">
          <ResponseChart />
          <Legend />
          <div className="mt-[14px] mb-[11px] ml-[5px] flex min-h-0 flex-1 gap-1">
            <div className="flex w-[550px] flex-col gap-[5px]">
              {folded.map((name) => (
                <button
                  key={name}
                  type="button"
                  className="flex h-[25px] items-center justify-between bg-[#c0c0c0] pr-[9px] pl-[11px] font-bold"
                >
                  {name}
                  <FoldIcon />
                </button>
              ))}
            </div>
            <ScrollBar />
          </div>
        </div>
      </main>
      <TaskBar />
    </div>
  );
}
